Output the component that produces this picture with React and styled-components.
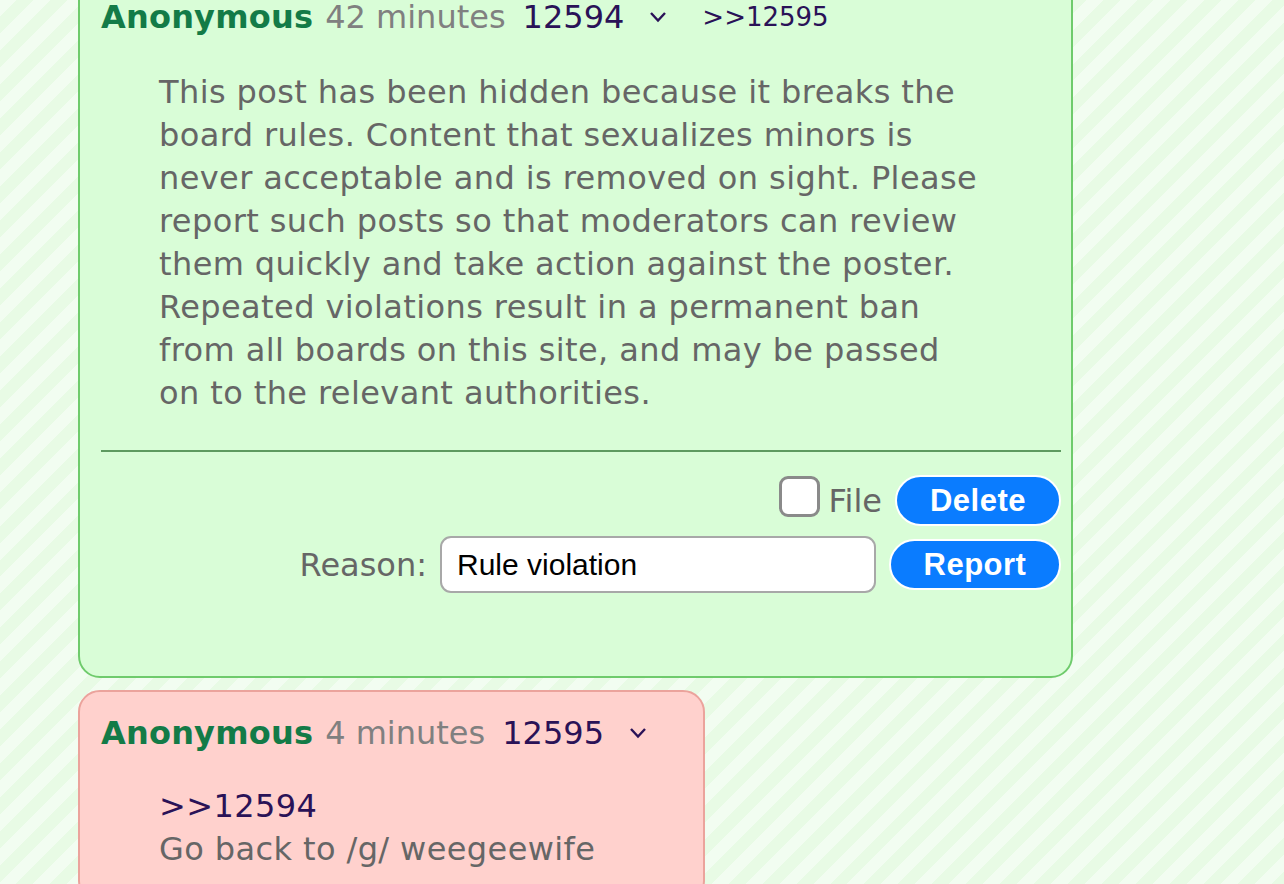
import styled, { createGlobalStyle } from 'styled-components';

const GlobalStyle = createGlobalStyle`
  html, body {
    margin: 0;
    padding: 0;
  }
  body {
    min-height: 884px;
    overflow: hidden;
    font-family: "DejaVu Sans", Verdana, sans-serif;
    background: repeating-linear-gradient(135deg, #f2fdf1 0 12px, #e8fbe5 12px 24px);
  }
`;

const Page = styled.div`
  display: flex;
  flex-direction: column;
  align-items: flex-start;
  gap: 12px;
  padding-left: 78px;
`;

const Card = styled.div`
  box-sizing: border-box;
  width: ${p => p.$width}px;
  background: ${p => (p.$reply ? '#ffd1cd' : '#d9fdd7')};
  border: 2px solid ${p => (p.$reply ? '#eba39c' : '#6fcb6c')};
  border-radius: 22px;
  padding: ${p => (p.$reply ? '19px 11px 30px 21px' : '23px 10px 83px 21px')};
  margin-top: ${p => (p.$reply ? '0' : '-30px')};
`;

const Header = styled.div`
  display: flex;
  align-items: center;
  height: 43px;
  white-space: nowrap;
`;

const Name = styled.span`
  color: #137b47;
  font-weight: bold;
  font-size: 32px;
  letter-spacing: 0.2px;
`;

const Time = styled.span`
  color: #808080;
  font-size: 32px;
  margin-left: 12px;
`;

const PostNo = styled.span`
  color: #2a1257;
  font-size: 32px;
  margin-left: 17px;
`;

const Chevron = styled.svg`
  margin-left: 25px;
  width: 18px;
  height: 12px;
`;

const BackLink = styled.span`
  color: #2a1257;
  font-size: 26px;
  margin-left: 35px;
`;

const Body = styled.div`
  margin-top: ${p => (p.$reply ? '31px' : '33px')};
  padding-left: 58px;
  color: #666;
  font-size: 32px;
  line-height: 43px;
  letter-spacing: 0.4px;
  white-space: nowrap;
`;

const Quote = styled.div`
  color: #2a1257;
`;

const Rule = styled.hr`
  margin: 35px 0 23px 0;
  border: none;
  height: 2px;
  background: #5e9a60;
`;

const Controls = styled.div`
  display: flex;
  flex-direction: column;
  align-items: flex-end;
  gap: 10px;
`;

const ControlRow = styled.div`
  display: flex;
  align-items: center;
  gap: 13px;
`;

const CheckLabel = styled.label`
  display: flex;
  align-items: center;
  gap: 8px;
  color: #666;
  font-size: 32px;
`;

const Box = styled.span`
  box-sizing: border-box;
  width: 41px;
  height: 41px;
  margin-bottom: 8px;
  border: 3px solid #8a8a8a;
  border-radius: 9px;
  background: #fff;
`;

const Label = styled.span`
  color: #666;
  font-size: 32px;
`;

const ReasonInput = styled.input`
  box-sizing: border-box;
  width: 436px;
  height: 57px;
  border: 2px solid #a8a8a8;
  border-radius: 11px;
  background: #fff;
  padding: 0 15px;
  font-family: "Liberation Sans", Arial, sans-serif;
  font-size: 30px;
  color: #000;
  outline: none;
`;

const Button = styled.button`
  box-sizing: border-box;
  width: ${p => p.$w}px;
  height: 51px;
  border: 2px solid #fff;
  border-radius: 26px;
  background: #0a7cff;
  color: #fff;
  font-family: "Liberation Sans", Arial, sans-serif;
  font-weight: bold;
  font-size: 31px;
  letter-spacing: 0.5px;
  padding: 0;
`;

function Arrow() {
  return (
    <Chevron viewBox="0 0 18 12">
      <polyline points="2,2 9,9.5 16,2" fill="none" stroke="#2a1257" strokeWidth="2.4" />
    </Chevron>
  );
}

function App() {
  return (
    <>
      <GlobalStyle />
      <Page>
        <Card $width={995}>
          <Header>
            <Name>Anonymous</Name>
            <Time>42 minutes</Time>
            <PostNo>12594</PostNo>
            <Arrow />
            <BackLink>&gt;&gt;12595</BackLink>
          </Header>
          <Body>
            This post has been hidden because it breaks the<br />
            board rules. Content that sexualizes minors is<br />
            never acceptable and is removed on sight. Please<br />
            report such posts so that moderators can review<br />
            them quickly and take action against the poster.<br />
            Repeated violations result in a permanent ban<br />
            from all boards on this site, and may be passed<br />
            on to the relevant authorities.
          </Body>
          <Rule />
          <Controls>
            <ControlRow>
              <CheckLabel>
                <Box />
                File
              </CheckLabel>
              <Button $w={166}>Delete</Button>
            </ControlRow>
            <ControlRow>
              <Label>Reason:</Label>
              <ReasonInput defaultValue="Rule violation" />
              <Button $w={172}>Report</Button>
            </ControlRow>
          </Controls>
        </Card>
        <Card $width={627} $reply>
          <Header>
            <Name>Anonymous</Name>
            <Time>4 minutes</Time>
            <PostNo>12595</PostNo>
            <Arrow />
          </Header>
          <Body $reply>
            <Quote>&gt;&gt;12594</Quote>
            Go back to /g/ weegeewife
          </Body>
        </Card>
      </Page>
    </>
  );
}

export default App;
